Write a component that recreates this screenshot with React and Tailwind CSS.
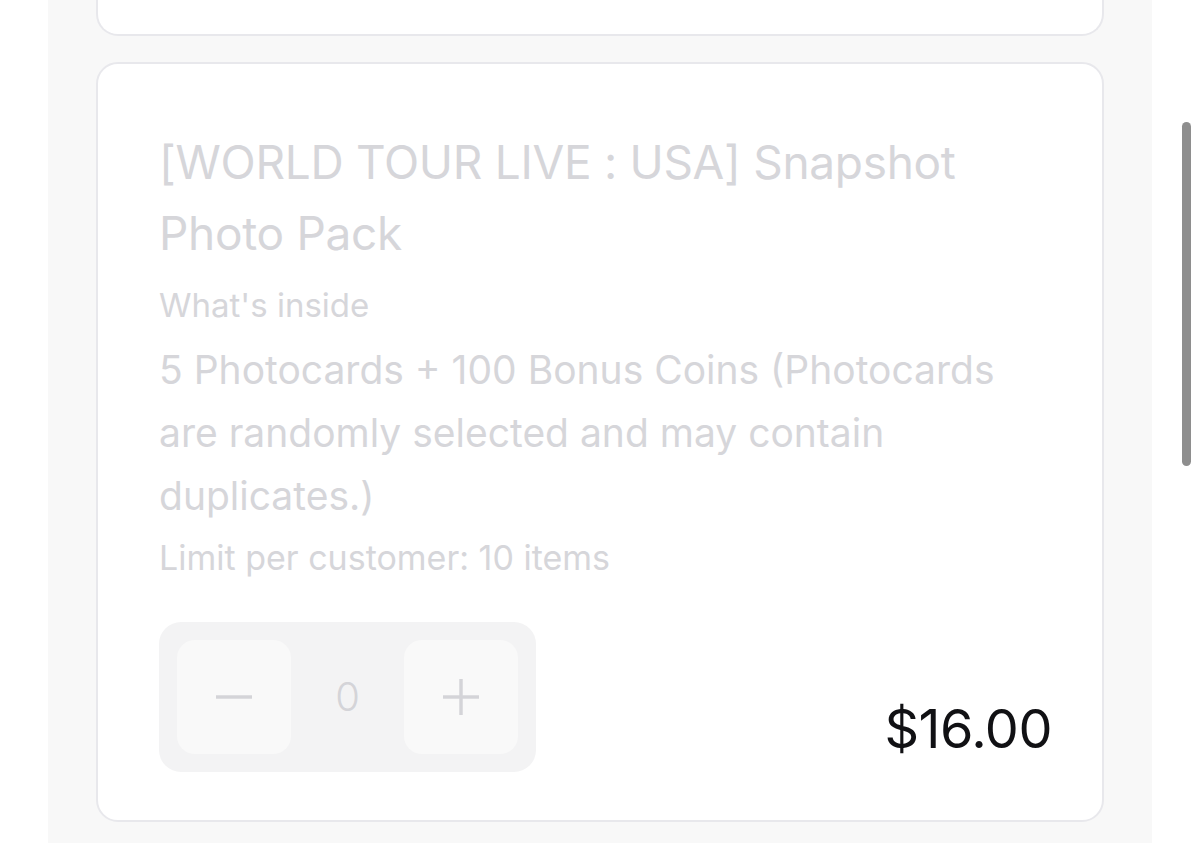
import React from "react";

export default function App() {
  const font = { fontFamily: "Inter, 'Noto Sans', 'Liberation Sans', sans-serif" };
  return (
    <div className="relative w-full h-[843px] bg-white flex px-[48px] overflow-hidden" style={font}>
      <div className="flex-1 bg-[#f8f8f8] px-[48px] flex flex-col">
        <div className="h-[36px] bg-white border-2 border-t-0 border-[#e8e8ec] rounded-b-[22px]" />
        <div className="mt-[26px] bg-white border-2 border-[#e8e8ec] rounded-[22px] pl-[61px] pr-[50px] pt-[63px] pb-[48px]">
          <h2 className="text-[46px] leading-[71px] text-[#d6d6da] font-normal tracking-[-0.3px] max-w-[820px]">
            [WORLD TOUR LIVE : USA] Snapshot Photo Pack
          </h2>
          <p className="mt-[15px] text-[33px] leading-[42px] text-[#d6d6da]">What's inside</p>
          <p className="mt-[12px] text-[39px] leading-[63px] text-[#d6d6da] max-w-[880px]">
            5 Photocards + 100 Bonus Coins (Photocards are randomly selected and may contain duplicates.)
          </p>
          <p className="mt-[10px] text-[34px] leading-[42px] text-[#d6d6da]">Limit per customer: 10 items</p>
          <div className="mt-[43px] flex items-end justify-between">
            <div className="w-[377px] h-[150px] bg-[#f3f3f4] rounded-[22px] flex items-center justify-between px-[18px]">
              <div className="w-[114px] h-[114px] bg-[#f9f9f9] rounded-[18px] flex items-center justify-center">
                <svg width="36" height="36" viewBox="0 0 36 36">
                  <line x1="0" y1="18" x2="36" y2="18" stroke="#d4d4d8" strokeWidth="3.5" />
                </svg>
              </div>
              <span className="text-[40px] font-light text-[#d4d4d8]">0</span>
              <div className="w-[114px] h-[114px] bg-[#f9f9f9] rounded-[18px] flex items-center justify-center">
                <svg width="36" height="36" viewBox="0 0 36 36">
                  <line x1="0" y1="18" x2="36" y2="18" stroke="#d4d4d8" strokeWidth="3.5" />
                  <line x1="18" y1="0" x2="18" y2="36" stroke="#d4d4d8" strokeWidth="3.5" />
                </svg>
              </div>
            </div>
            <span className="text-[54px] leading-[62px] text-[#111114] mb-[12px] tracking-[-0.5px]">$16.00</span>
          </div>
        </div>
        <div className="flex-1" />
      </div>
      <div className="absolute left-[1182px] top-[122px] w-[9px] h-[344px] rounded-full bg-[#8e8e8e]" />
    </div>
  );
}
